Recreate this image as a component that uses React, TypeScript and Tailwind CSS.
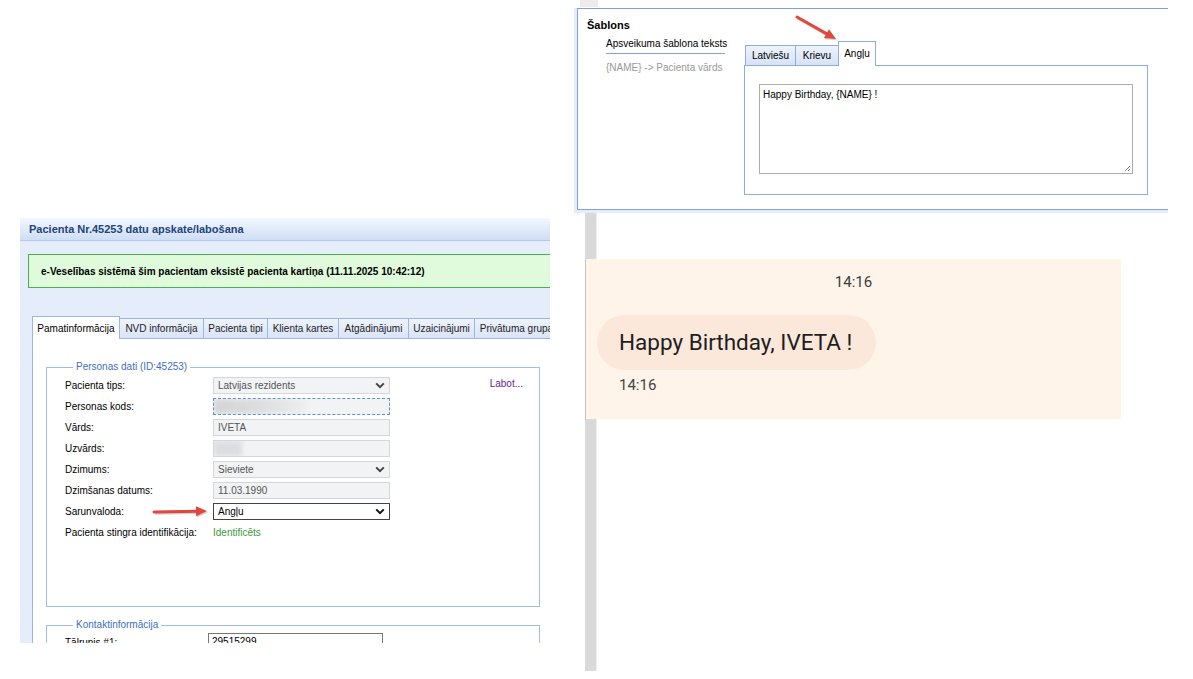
import React from "react";

const ui = "font-['Liberation_Sans',Arial,sans-serif]";

function Chevron({ color = "#333" }: { color?: string }) {
  return (
    <svg width="10" height="7" viewBox="0 0 10 7" className="shrink-0">
      <path d="M1.2 1.4 L5 5.2 L8.8 1.4" fill="none" stroke={color} strokeWidth="2" />
    </svg>
  );
}

function RedArrow({ x1, y1, x2, y2, w, h }: { x1: number; y1: number; x2: number; y2: number; w: number; h: number }) {
  const dx = x2 - x1;
  const dy = y2 - y1;
  const len = Math.hypot(dx, dy);
  const ux = dx / len;
  const uy = dy / len;
  const bx = x2 - ux * 11;
  const by = y2 - uy * 11;
  const px = -uy * 5;
  const py = ux * 5;
  return (
    <svg width={w} height={h} viewBox={`0 0 ${w} ${h}`}>
      <g transform="translate(0.8 1.2)" opacity="0.18">
        <line x1={x1} y1={y1} x2={bx} y2={by} stroke="#000" strokeWidth="3" />
        <polygon points={`${x2},${y2} ${bx + px},${by + py} ${bx - px},${by - py}`} fill="#000" />
      </g>
      <line x1={x1} y1={y1} x2={bx + ux} y2={by + uy} stroke="#e2463c" strokeWidth="3" strokeLinecap="round" />
      <polygon points={`${x2},${y2} ${bx + px},${by + py} ${bx - px},${by - py}`} fill="#e2463c" />
    </svg>
  );
}

const field = "h-[17px] w-[177px] flex items-center justify-between px-[4px] text-[10px]";
const greyField = "bg-[#f2f3f5] border border-[#d3d6db] text-[#555]";

function PatientPanel() {
  const tabs: [string, string][] = [
    ["NVD informācija", "w-[85px]"],
    ["Pacienta tipi", "w-[65px]"],
    ["Klienta kartes", "w-[72px]"],
    ["Atgādinājumi", "w-[71px]"],
    ["Uzaicinājumi", "w-[67px]"],
    ["Privātuma grupas", "w-[90px]"],
  ];
  return (
    <div className={`absolute left-[20px] top-[218px] w-[530px] h-[425px] overflow-hidden bg-[#e6edfa] flex flex-col ${ui}`}>
      <div className="h-[23px] shrink-0 bg-gradient-to-b from-[#f3f7fe] to-[#cfdef5] border-b border-[#b5c9e9] pl-[9px] flex items-center text-[11px] font-bold text-[#23437c]">
        Pacienta Nr.45253 datu apskate/labošana
      </div>
      <div className="mt-[13px] ml-[8px] h-[34px] shrink-0 bg-[#e0fbdc] border border-r-0 border-[#4cae4c] flex items-center pl-[12px] text-[10px] font-bold text-black whitespace-nowrap">
        e-Veselības sistēmā šim pacientam eksistē pacienta kartiņa (11.11.2025 10:42:12)
      </div>
      <div className="mt-[28px] ml-[12px] flex items-end shrink-0 whitespace-nowrap text-[10px]">
        <div className="relative z-10 -mb-px h-[23px] w-[88px] shrink-0 bg-white border border-b-0 border-[#9db6e0] flex items-center justify-center text-black">
          Pamatinformācija
        </div>
        {tabs.map(([t, w]) => (
          <div
            key={t}
            className={`h-[20px] ${w} shrink-0 -ml-px bg-gradient-to-b from-[#eef3fc] to-[#d9e4f6] border border-b-0 border-[#9db6e0] flex items-center justify-center text-[#222] overflow-hidden`}
          >
            {t}
          </div>
        ))}
      </div>
      <div className="ml-[12px] flex-1 bg-white border-l border-t border-[#9db6e0] pl-[13px] pr-[10px] pt-[22px] text-[10px] text-black">
        <fieldset className="border border-[#a3bce6] h-[246px] pl-[18px] pr-[16px] pt-[4px]">
          <legend className="ml-[8px] px-[3px] text-[#3e6fbf] text-[10px] leading-[12px]">Personas dati (ID:45253)</legend>
          <div className="grid grid-cols-[148px_177px_1fr] gap-y-[4px] items-center">
            <span>Pacienta tips:</span>
            <div className={`${field} ${greyField}`}>
              <span>Latvijas rezidents</span>
              <Chevron color="#444" />
            </div>
            <span className="justify-self-end -mt-[4px] text-[#6a1b9a]">Labot...</span>

            <span>Personas kods:</span>
            <div className={`${field} bg-[#f2f3f5] border border-dashed border-[#5f8fd8] !px-0 overflow-hidden`}>
              <div className="h-full w-[92px] bg-gradient-to-r from-[#d4d5d7] via-[#dcdddf] to-[#eceef0] blur-[2px]" />
            </div>
            <span />

            <span>Vārds:</span>
            <div className={`${field} ${greyField}`}>
              <span>IVETA</span>
            </div>
            <span />

            <span>Uzvārds:</span>
            <div className={`${field} ${greyField} !px-0 overflow-hidden`}>
              <div className="h-full w-[28px] bg-[#dcdde0] blur-[2px]" />
            </div>
            <span />

            <span>Dzimums:</span>
            <div className={`${field} ${greyField}`}>
              <span>Sieviete</span>
              <Chevron color="#444" />
            </div>
            <span />

            <span>Dzimšanas datums:</span>
            <div className={`${field} ${greyField}`}>
              <span>11.03.1990</span>
            </div>
            <span />

            <span>Sarunvaloda:</span>
            <div className={`${field} bg-white border border-[#444] text-black`}>
              <span>Angļu</span>
              <Chevron color="#111" />
            </div>
            <span />

            <span className="h-[17px] flex items-center">Pacienta stingra identifikācija:</span>
            <span className="text-[#3a9a3a]">Identificēts</span>
            <span />
          </div>
        </fieldset>
        <fieldset className="mt-[12px] border border-[#a3bce6] h-[80px] pl-[18px] pt-[2px]">
          <legend className="ml-[8px] px-[3px] text-[#3e6fbf] text-[10px] leading-[12px]">Kontaktinformācija</legend>
          <div className="grid grid-cols-[143px_175px] items-center">
            <span>Tālrunis #1:</span>
            <div className="h-[18px] w-[175px] bg-white border border-[#777] px-[3px] text-[10px] text-black">29515299</div>
          </div>
        </fieldset>
      </div>
    </div>
  );
}

function TemplatePanel() {
  return (
    <div className={`absolute left-[574px] top-[8px] w-[594px] h-[205px] bg-[#e6edfa] pl-[3px] pb-[3px] ${ui}`}>
      <div className="h-full bg-white border-t border-l border-b border-[#7ea2db] pl-[9px] pt-[9px] text-[10px] text-black">
        <div className="h-[14px] leading-[14px] text-[11px] font-bold">Šablons</div>
        <div className="mt-[4px] ml-[19px] flex">
          <div className="w-[138px] shrink-0 pt-[1px] whitespace-nowrap">
            <div className="w-[119px] h-[17px] leading-[14px] border-b border-[#7fa2d6] text-[10px]">Apsveikuma šablona teksts</div>
            <div className="mt-[7px] leading-[14px] text-[#999] text-[10px]">{"{NAME} -> Pacienta vārds"}</div>
          </div>
          <div className="pt-[5px]">
            <div className="flex items-end pl-[1px] text-[10px]">
              <div className="h-[20px] w-[51px] bg-gradient-to-b from-[#eef3fc] to-[#d6e2f5] border border-b-0 border-[#8eacdc] flex items-center justify-center">Latviešu</div>
              <div className="h-[20px] w-[44px] -ml-px bg-gradient-to-b from-[#eef3fc] to-[#d6e2f5] border border-b-0 border-[#8eacdc] flex items-center justify-center">Krievu</div>
              <div className="relative z-10 -mb-px h-[25px] w-[38px] -ml-px bg-white border border-b-0 border-[#8eacdc] flex items-start pt-[4px] justify-center">Angļu</div>
            </div>
            <div className="w-[404px] h-[130px] border border-[#8eacdc] pl-[14px] pt-[18px]">
              <div className="relative w-[374px] h-[90px] border border-[#adadad] px-[3px] pt-[2px] text-[10px]">
                {"Happy Birthday, {NAME} !"}
                <svg width="8" height="8" viewBox="0 0 8 8" className="absolute right-[1px] bottom-[1px]">
                  <path d="M7 2 L2 7 M7 5 L5 7" stroke="#888" strokeWidth="1" />
                </svg>
              </div>
            </div>
          </div>
        </div>
      </div>
    </div>
  );
}

function MessagePreview() {
  return (
    <>
      <div className="absolute left-[580px] top-0 w-[18px] h-[7px] bg-[#ececec]" />
      <div className="absolute left-[585px] top-[213px] w-[12px] h-[458px] bg-[#d9d9d9] border-r border-[#eeeeee]" />
      <div className="absolute left-[585px] top-[259px] w-[536px] h-[160px] bg-[#fef4e9] border-l border-[#c9c2bb] font-['Roboto',sans-serif] text-[#222]">
        <div className="pt-[14px] text-center text-[15px] leading-[18px] text-[#3c3c3c]">14:16</div>
        <div className="mt-[24px] ml-[11px] inline-flex h-[55px] items-center rounded-full bg-[#fbe8da] pl-[22px] pr-[24px] text-[22.5px] text-[#1e1e1e]">
          Happy Birthday, IVETA !
        </div>
        <div className="mt-[6px] pl-[33px] text-[15px] leading-[18px] text-[#444]">14:16</div>
      </div>
    </>
  );
}

export default function App() {
  return (
    <div className="relative w-[1193px] h-[679px] overflow-hidden bg-white">
      <TemplatePanel />
      <MessagePreview />
      <PatientPanel />
      <div className="absolute left-[792px] top-[12px]">
        <RedArrow x1={5} y1={5} x2={44} y2={27} w={50} h={32} />
      </div>
      <div className="absolute left-[150px] top-[503px]">
        <RedArrow x1={4} y1={9} x2={57} y2={8} w={62} h={18} />
      </div>
    </div>
  );
}
